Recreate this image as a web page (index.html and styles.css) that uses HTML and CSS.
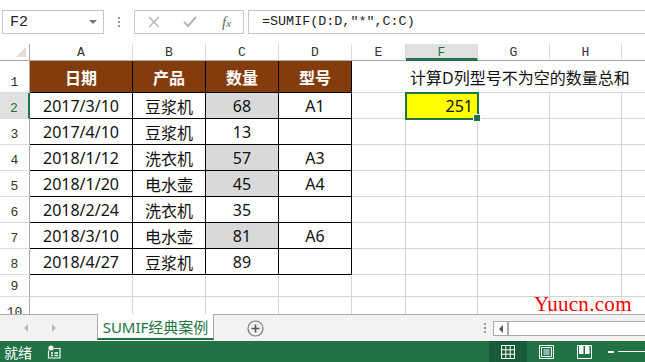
FILE: index.html
```html
<!DOCTYPE html>
<html>
    <head>
        <meta charset="utf-8">
        <link rel="stylesheet" href="styles.css">
    </head>
    <body>
        <div class="app">
            <div class="toolbar">
                <div class="namebox">
                    <span>F2</span>
                    <span class="drop"></span>
                </div>
                <div class="vdots"><i></i><i></i><i></i></div>
                <div class="fxbox">
                    <svg width="12" height="12" viewBox="0 0 12 12"><path d="M1 1 L11 11 M11 1 L1 11" stroke="#b4b4b4" stroke-width="1.3" fill="none"/></svg>
                    <svg width="14" height="12" viewBox="0 0 14 12"><path d="M1 6 L5 10 L13 1" stroke="#b4b4b4" stroke-width="2" fill="none"/></svg>
                    <span class="fx">f<small>x</small></span>
                </div>
                <div class="formula">=SUMIF(D:D,"*",C:C)</div>
            </div>

            <div class="sheetwrap">
                <div class="sheet">
                    <div class="ch corner"><span class="tri"></span></div>
                    <div class="ch">A</div>
                    <div class="ch">B</div>
                    <div class="ch">C</div>
                    <div class="ch">D</div>
                    <div class="ch">E</div>
                    <div class="ch ch-sel">F</div>
                    <div class="ch">G</div>
                    <div class="ch">H</div>
                    <div class="ch last"></div>

                    <div class="rh">1</div>
                    <div class="c t head">日期</div>
                    <div class="c t head">产品</div>
                    <div class="c t head">数量</div>
                    <div class="c t head">型号</div>
                    <div class="c note">计算D列型号不为空的数量总和</div>

                    <div class="rh rh-sel">2</div>
                    <div class="c t">2017/3/10</div>
                    <div class="c t">豆浆机</div>
                    <div class="c t gray">68</div>
                    <div class="c t">A1</div>
                    <div class="c"></div>
                    <div class="c sel">251</div>
                    <div class="c"></div>
                    <div class="c"></div>
                    <div class="c last"></div>

                    <div class="rh">3</div>
                    <div class="c t">2017/4/10</div>
                    <div class="c t">豆浆机</div>
                    <div class="c t">13</div>
                    <div class="c t"></div>
                    <div class="c"></div>
                    <div class="c"></div>
                    <div class="c"></div>
                    <div class="c"></div>
                    <div class="c last"></div>

                    <div class="rh">4</div>
                    <div class="c t">2018/1/12</div>
                    <div class="c t">洗衣机</div>
                    <div class="c t gray">57</div>
                    <div class="c t">A3</div>
                    <div class="c"></div>
                    <div class="c"></div>
                    <div class="c"></div>
                    <div class="c"></div>
                    <div class="c last"></div>

                    <div class="rh">5</div>
                    <div class="c t">2018/1/20</div>
                    <div class="c t">电水壶</div>
                    <div class="c t gray">45</div>
                    <div class="c t">A4</div>
                    <div class="c"></div>
                    <div class="c"></div>
                    <div class="c"></div>
                    <div class="c"></div>
                    <div class="c last"></div>

                    <div class="rh">6</div>
                    <div class="c t">2018/2/24</div>
                    <div class="c t">洗衣机</div>
                    <div class="c t">35</div>
                    <div class="c t"></div>
                    <div class="c"></div>
                    <div class="c"></div>
                    <div class="c"></div>
                    <div class="c"></div>
                    <div class="c last"></div>

                    <div class="rh">7</div>
                    <div class="c t">2018/3/10</div>
                    <div class="c t">电水壶</div>
                    <div class="c t gray">81</div>
                    <div class="c t">A6</div>
                    <div class="c"></div>
                    <div class="c"></div>
                    <div class="c"></div>
                    <div class="c"></div>
                    <div class="c last"></div>

                    <div class="rh">8</div>
                    <div class="c t">2018/4/27</div>
                    <div class="c t">豆浆机</div>
                    <div class="c t">89</div>
                    <div class="c t"></div>
                    <div class="c"></div>
                    <div class="c"></div>
                    <div class="c"></div>
                    <div class="c"></div>
                    <div class="c last"></div>

                    <div class="rh">9</div>
                    <div class="c"></div>
                    <div class="c"></div>
                    <div class="c"></div>
                    <div class="c"></div>
                    <div class="c"></div>
                    <div class="c"></div>
                    <div class="c"></div>
                    <div class="c"></div>
                    <div class="c last"></div>

                    <div class="rh">10</div>
                    <div class="c"></div>
                    <div class="c"></div>
                    <div class="c"></div>
                    <div class="c"></div>
                    <div class="c"></div>
                    <div class="c"></div>
                    <div class="c"></div>
                    <div class="c"></div>
                    <div class="c last"></div>
                </div>
                <div class="watermark">Yuucn.com</div>
            </div>

            <div class="tabbar">
                <div class="nav">
                    <span class="arr left"></span>
                    <span class="arr right"></span>
                </div>
                <div class="tab">SUMIF经典案例</div>
                <div class="addtab">
                    <svg width="17" height="17" viewBox="0 0 17 17"><circle cx="8.5" cy="8.5" r="7.5" stroke="#7a7a7a" stroke-width="1.2" fill="none"/><path d="M8.5 4.5 V12.5 M4.5 8.5 H12.5" stroke="#555" stroke-width="1.6"/></svg>
                </div>
                <div class="spacer"></div>
                <div class="hdots"><i></i><i></i><i></i></div>
                <div class="hscroll">
                    <div class="sbtn"><span></span></div>
                </div>
            </div>

            <div class="status">
                <span class="ready">就绪</span>
                <svg class="macro" width="14" height="14" viewBox="0 0 14 14">
                    <circle cx="4" cy="3" r="2.6" fill="#fff"/>
                    <path d="M1.5 5.5 V13 H13 V3.5 H7" stroke="#fff" stroke-width="1.2" fill="none"/>
                    <path d="M4 8 H6 M7.5 8 H11 M4 10.5 H6 M7.5 10.5 H11" stroke="#fff" stroke-width="1.3"/>
                </svg>
                <div class="spacer"></div>
                <div class="view on">
                    <svg width="14" height="14" viewBox="0 0 14 14"><path d="M0.5 0.5 H13.5 V13.5 H0.5 Z M0.5 4.8 H13.5 M0.5 9.2 H13.5 M4.8 0.5 V13.5 M9.2 0.5 V13.5" stroke="#fff" stroke-width="1" fill="none"/></svg>
                </div>
                <div class="view">
                    <svg width="15" height="14" viewBox="0 0 15 14"><path d="M0.5 0.5 H14.5 V13.5 H0.5 Z M2.5 2.5 H12.5 V11.5 H2.5 Z M4.5 5 H10.5 M4.5 7 H10.5 M4.5 9 H10.5" stroke="#fff" stroke-width="1" fill="none"/></svg>
                </div>
                <div class="view">
                    <svg width="15" height="14" viewBox="0 0 15 14"><path d="M0.5 0.5 H14.5 V13.5 H0.5 Z" stroke="#fff" stroke-width="1" fill="none"/><rect x="2" y="1" width="4.5" height="8" fill="#fff"/><rect x="8" y="1" width="4.5" height="8" fill="#fff"/></svg>
                </div>
                <div class="zoom">
                    <span class="minus"></span>
                    <span class="line"></span>
                </div>
            </div>
        </div>
    </body>
</html>
```

FILE: styles.css
```css
*{
    box-sizing: border-box;
    margin: 0px;
    padding: 0px;
}
body{
    width: 645px;
    height: 362px;
    overflow: hidden;
    background: #fff;
    font-family: "Noto Sans", "Noto Sans CJK SC", sans-serif;
}
.app{
    display: flex;
    flex-direction: column;
    height: 362px;
}

/* formula bar */
.toolbar{
    height: 44px;
    display: flex;
    align-items: flex-start;
    padding-top: 10px;
    padding-left: 2px;
    background: #fff;
}
.namebox{
    width: 102px;
    height: 24px;
    border: 1px solid #c6c6c6;
    display: flex;
    align-items: center;
    justify-content: space-between;
    padding: 0 6px 0 7px;
    font-family: "Liberation Mono", monospace;
    font-size: 15px;
    color: #222;
}
.drop{
    width: 0;
    height: 0;
    border-left: 4px solid transparent;
    border-right: 4px solid transparent;
    border-top: 4px solid #777;
}
.vdots{
    width: 30px;
    height: 24px;
    display: flex;
    flex-direction: column;
    align-items: center;
    justify-content: center;
    gap: 2px;
}
.vdots i, .hdots i{
    display: block;
    width: 2px;
    height: 2px;
    background: #9a9a9a;
}
.fxbox{
    width: 110px;
    height: 24px;
    border: 1px solid #c6c6c6;
    display: flex;
    align-items: center;
    padding-left: 13px;
    gap: 23px;
}
.fx{
    font-family: "Liberation Serif", serif;
    font-style: italic;
    font-size: 15px;
    color: #666;
    margin-left: 2px;
}
.fx small{
    font-size: 11px;
}
.formula{
    flex: 1;
    height: 24px;
    margin-left: 4px;
    border: 1px solid #c6c6c6;
    border-right: none;
    padding-left: 13px;
    line-height: 22px;
    font-family: "Liberation Mono", monospace;
    font-size: 13.4px;
    color: #222;
}

/* sheet */
.sheetwrap{
    position: relative;
    height: 270px;
    overflow: hidden;
}
.sheet{
    display: grid;
    grid-template-columns: 30px 103px 73px 73px 73px 54px 72px 72px 72px 23px;
    grid-template-rows: 17px 32px repeat(7, 26px) 22px 26px;
}
.ch{
    border-right: 1px solid #dadada;
    border-bottom: 1px solid #ababab;
    display: flex;
    align-items: center;
    justify-content: center;
    font-family: "Liberation Mono", monospace;
    font-size: 13px;
    color: #333;
}
.ch.last{
    border-right: none;
}
.corner{
    border-right: 1px solid #ababab;
    position: relative;
}
.tri{
    position: absolute;
    right: 3px;
    bottom: 3px;
    width: 0;
    height: 0;
    border-left: 10px solid transparent;
    border-bottom: 10px solid #dcdcdc;
}
.ch-sel{
    background: #e1e1e1;
    color: #217346;
    border-bottom: 3px solid #217346;
    padding-top: 2px;
}
.rh{
    border-right: 1px solid #ababab;
    border-bottom: 1px solid #dadada;
    display: flex;
    align-items: flex-end;
    justify-content: center;
    padding-bottom: 2px;
    font-family: "Liberation Mono", monospace;
    font-size: 13px;
    color: #333;
}
.rh-sel{
    background: #e1e1e1;
    color: #217346;
    border-right: 2px solid #217346;
}
.c{
    border-right: 1px solid #d4d4d4;
    border-bottom: 1px solid #d4d4d4;
    display: flex;
    align-items: center;
    justify-content: center;
    font-size: 16px;
    color: #111;
}
.c.last{
    border-right: none;
}
.c.t{
    border-right: 1px solid #000;
    border-bottom: 1px solid #000;
}
.c.head{
    background: #843c0c;
    color: #fff;
    font-weight: bold;
}
.c.gray{
    background: #d9d9d9;
}
.c.note{
    grid-column: span 5;
    justify-content: flex-start;
    padding-left: 58px;
    white-space: nowrap;
    border-right: none;
    color: #111;
}
.c.sel{
    position: relative;
    background: #ffff00;
    justify-content: flex-end;
    padding-right: 4px;
    outline: 2px solid #217346;
    outline-offset: -1px;
    z-index: 2;
}
.c.sel::after{
    content: "";
    position: absolute;
    right: -4px;
    bottom: -4px;
    width: 6px;
    height: 6px;
    background: #217346;
    border: 1px solid #fff;
}
.watermark{
    position: absolute;
    left: 534px;
    top: 251px;
    line-height: 18px;
    font-family: "Liberation Serif", serif;
    font-size: 21px;
    letter-spacing: 0.3px;
    color: #ff0000;
    z-index: 3;
}

/* sheet tabs */
.tabbar{
    height: 27px;
    display: flex;
    background: #f3f3f3;
    border-top: 1px solid #ababab;
}
.nav{
    width: 97px;
    display: flex;
    align-items: center;
    padding-left: 24px;
    gap: 24px;
}
.arr{
    width: 0;
    height: 0;
    border-top: 4px solid transparent;
    border-bottom: 4px solid transparent;
}
.arr.left{
    border-right: 4px solid #c0c0c0;
}
.arr.right{
    border-left: 4px solid #c0c0c0;
}
.tab{
    width: 117px;
    margin-top: -1px;
    background: #fff;
    border-left: 1px solid #ababab;
    border-right: 1px solid #ababab;
    border-bottom: 2px solid #217346;
    margin-bottom: 1px;
    display: flex;
    align-items: center;
    justify-content: center;
    font-size: 15px;
    color: #217346;
}
.addtab{
    width: 52px;
    display: flex;
    align-items: center;
    justify-content: center;
    padding-left: 30px;
}
.spacer{
    flex: 1;
}
.hdots{
    width: 16px;
    display: flex;
    flex-direction: column;
    align-items: center;
    justify-content: center;
    gap: 2px;
}
.hscroll{
    width: 152px;
    height: 15px;
    margin-top: 6px;
    border: 1px solid #ababab;
    border-right: none;
    background: #fff;
    display: flex;
}
.sbtn{
    width: 15px;
    border-right: 2px solid #ababab;
    display: flex;
    align-items: center;
    justify-content: center;
}
.sbtn span{
    width: 0;
    height: 0;
    border-top: 4px solid transparent;
    border-bottom: 4px solid transparent;
    border-right: 4px solid #555;
}

/* status bar */
.status{
    height: 21px;
    background: #217346;
    display: flex;
    align-items: center;
    color: #fff;
}
.ready{
    font-size: 14px;
    padding-left: 4px;
    width: 47px;
}
.macro{
    margin-top: 1px;
}
.view{
    width: 38px;
    height: 21px;
    display: flex;
    align-items: center;
    justify-content: center;
    margin-right: 0px;
}
.view.on{
    background: #185c37;
}
.zoom{
    width: 42px;
    display: flex;
    align-items: center;
    padding-left: 5px;
}
.zoom .minus{
    width: 6px;
    height: 2px;
    background: #fff;
}
.zoom .line{
    flex: 1;
    height: 1px;
    margin-left: 4px;
    background: #fff;
}
```
